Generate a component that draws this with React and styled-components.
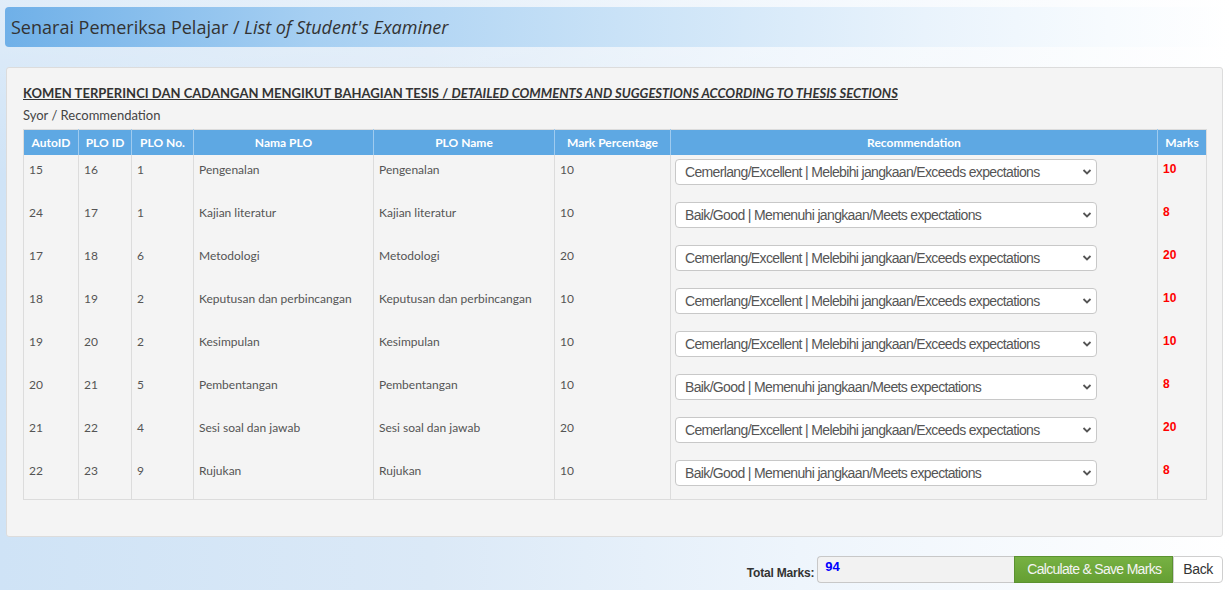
import React from "react";
import styled, { createGlobalStyle } from "styled-components";

const Global = createGlobalStyle`
  html, body { margin: 0; padding: 0; }
  body {
    width: 1231px;
    height: 590px;
    overflow: hidden;
    font-family: Lato, "Open Sans", sans-serif;
    color: #555;
    background:
      linear-gradient(180deg, rgba(255,255,255,0.35) 0%, rgba(255,255,255,0) 30%),
      linear-gradient(90deg, #cfe3f6 0%, #dbe9f7 35%, #eef5fc 65%, #ffffff 100%);
  }
`;

const Page = styled.div`
  padding: 7px 8px 0 5px;
  display: flex;
  flex-direction: column;
`;

const TitleBar = styled.div`
  height: 40px;
  display: flex;
  align-items: center;
  padding-left: 6px;
  margin-right: -8px;
  border-radius: 4px 0 0 4px;
  background: linear-gradient(90deg, #6fb0e8 0%, #a6cff2 25%, #c9e2f7 50%, #e9f3fc 75%, #f7fbfe 90%, rgba(255,255,255,0.6) 100%);
  font-size: 18px;
  color: #333;
  font-family: "Open Sans", Lato, sans-serif;
  letter-spacing: 0;
  i { font-style: italic; }
`;

const Panel = styled.div`
  margin-top: 20px;
  margin-left: 1px;
  background: #f4f4f4;
  border: 1px solid #dcdcdc;
  border-radius: 3px;
  padding: 16px 16px 36px 16px;
`;

const Heading = styled.div`
  font-size: 13px;
  font-weight: 700;
  color: #333;
  text-decoration: underline;
  letter-spacing: 0.02px;
  line-height: 18px;
  i { font-style: italic; }
`;

const Sub = styled.div`
  font-size: 13px;
  color: #444;
  margin-top: 4px;
  line-height: 18px;
`;

const Table = styled.table`
  margin-top: 5px;
  border-collapse: collapse;
  width: 1183px;
  table-layout: fixed;
  font-size: 12px;
  border: 1px solid #dcdcdc;
`;

const Th = styled.th`
  background: #5ea8e3;
  color: #fff;
  font-weight: 700;
  height: 25px;
  padding: 0 4px;
  text-align: center;
  border-left: 1px solid #9fcbef;
  white-space: nowrap;
  &:first-child { border-left: none; }
`;

const Td = styled.td`
  height: 43px;
  vertical-align: top;
  padding: 6px 5px 0 5px;
  border-left: 1px solid #dcdcdc;
  color: ${(p) => (p.$mark ? "#ff0000" : "#555")};
  font-family: ${(p) => (p.$mark ? '"Liberation Sans", Arial, sans-serif' : "Lato, sans-serif")};
  font-weight: ${(p) => (p.$mark ? 700 : 400)};
  font-size: 12px;
  line-height: 17px;
  box-sizing: border-box;
  &:first-child { border-left: none; }
`;

const SelCell = styled.td`
  height: 43px;
  vertical-align: top;
  padding: 4px 5px 0 4px;
  border-left: 1px solid #dcdcdc;
  box-sizing: border-box;
`;

const SelWrap = styled.div`
  position: relative;
  width: 422px;
`;

const Select = styled.select`
  appearance: none;
  -webkit-appearance: none;
  width: 422px;
  height: 26px;
  border: 1px solid #c8c8c8;
  border-radius: 4px;
  background: #fff;
  padding: 0 24px 0 9px;
  font-family: "Liberation Sans", Arial, sans-serif;
  font-size: 14px;
  color: #555;
  letter-spacing: -0.65px;
  outline: none;
`;

const Chevron = styled.svg`
  position: absolute;
  right: 5px;
  top: 9px;
  pointer-events: none;
`;

const Footer = styled.div`
  display: flex;
  justify-content: flex-end;
  align-items: flex-start;
  margin-top: 19px;
`;

const Label = styled.span`
  font-family: "Liberation Sans", Arial, sans-serif;
  font-weight: 700;
  font-size: 12px;
  color: #333;
  margin-top: 10px;
  margin-right: 3px;
  letter-spacing: -0.2px;
`;

const TotalInput = styled.div`
  width: 197px;
  height: 27px;
  box-sizing: border-box;
  border: 1px solid #c8c8c8;
  border-right: none;
  border-radius: 4px 0 0 4px;
  background: #f2f2f2;
  padding: 2px 0 0 7px;
  font-family: "Liberation Sans", Arial, sans-serif;
  font-weight: 700;
  font-size: 13px;
  color: #0000ff;
`;

const Button = styled.button`
  height: 27px;
  box-sizing: border-box;
  padding: 0 ${(p) => (p.$primary ? "11px 0 12px" : "9px")};
  border: 1px solid ${(p) => (p.$primary ? "#5b9230" : "#cfcfcf")};
  border-radius: ${(p) => (p.$primary ? "0" : "0 4px 4px 0")};
  background: ${(p) => (p.$primary ? "linear-gradient(180deg, #77b143 0%, #659f33 100%)" : "#fff")};
  color: ${(p) => (p.$primary ? "#f4f4f4" : "#333")};
  font-family: "Liberation Sans", Arial, sans-serif;
  font-size: 14px;
  letter-spacing: ${(p) => (p.$primary ? "-0.7px" : "-0.35px")};
  cursor: pointer;
`;

const EXC = "Cemerlang/Excellent | Melebihi jangkaan/Exceeds expectations";
const GOOD = "Baik/Good | Memenuhi jangkaan/Meets expectations";

const rows = [
  [15, 16, 1, "Pengenalan", 10, EXC, 10],
  [24, 17, 1, "Kajian literatur", 10, GOOD, 8],
  [17, 18, 6, "Metodologi", 20, EXC, 20],
  [18, 19, 2, "Keputusan dan perbincangan", 10, EXC, 10],
  [19, 20, 2, "Kesimpulan", 10, EXC, 10],
  [20, 21, 5, "Pembentangan", 10, GOOD, 8],
  [21, 22, 4, "Sesi soal dan jawab", 20, EXC, 20],
  [22, 23, 9, "Rujukan", 10, GOOD, 8],
];

const widths = [55, 53, 62, 180, 181, 116, 487, 49];
const heads = ["AutoID", "PLO ID", "PLO No.", "Nama PLO", "PLO Name", "Mark Percentage", "Recommendation", "Marks"];

export default function App() {
  return (
    <>
      <Global />
      <Page>
        <TitleBar>
          Senarai Pemeriksa Pelajar /&nbsp;<i>List of Student's Examiner</i>
        </TitleBar>
        <Panel>
          <Heading>
            KOMEN TERPERINCI DAN CADANGAN MENGIKUT BAHAGIAN TESIS / <i>DETAILED COMMENTS AND SUGGESTIONS ACCORDING TO THESIS SECTIONS</i>
          </Heading>
          <Sub>Syor / Recommendation</Sub>
          <Table>
            <colgroup>
              {widths.map((w, i) => (
                <col key={i} style={{ width: w }} />
              ))}
            </colgroup>
            <thead>
              <tr>
                {heads.map((h) => (
                  <Th key={h}>{h}</Th>
                ))}
              </tr>
            </thead>
            <tbody>
              {rows.map((r) => (
                <tr key={r[0]}>
                  <Td>{r[0]}</Td>
                  <Td>{r[1]}</Td>
                  <Td>{r[2]}</Td>
                  <Td>{r[3]}</Td>
                  <Td>{r[3]}</Td>
                  <Td>{r[4]}</Td>
                  <SelCell>
                    <SelWrap>
                      <Select defaultValue={r[5]}>
                        <option>{EXC}</option>
                        <option>{GOOD}</option>
                      </Select>
                      <Chevron width="10" height="8" viewBox="0 0 10 8">
                        <path d="M1.5 2 L5 5.5 L8.5 2" fill="none" stroke="#555" strokeWidth="1.8" />
                      </Chevron>
                    </SelWrap>
                  </SelCell>
                  <Td $mark>{r[6]}</Td>
                </tr>
              ))}
            </tbody>
          </Table>
        </Panel>
        <Footer>
          <Label>Total Marks:</Label>
          <TotalInput>94</TotalInput>
          <Button $primary>Calculate &amp; Save Marks</Button>
          <Button>Back</Button>
        </Footer>
      </Page>
    </>
  );
}
